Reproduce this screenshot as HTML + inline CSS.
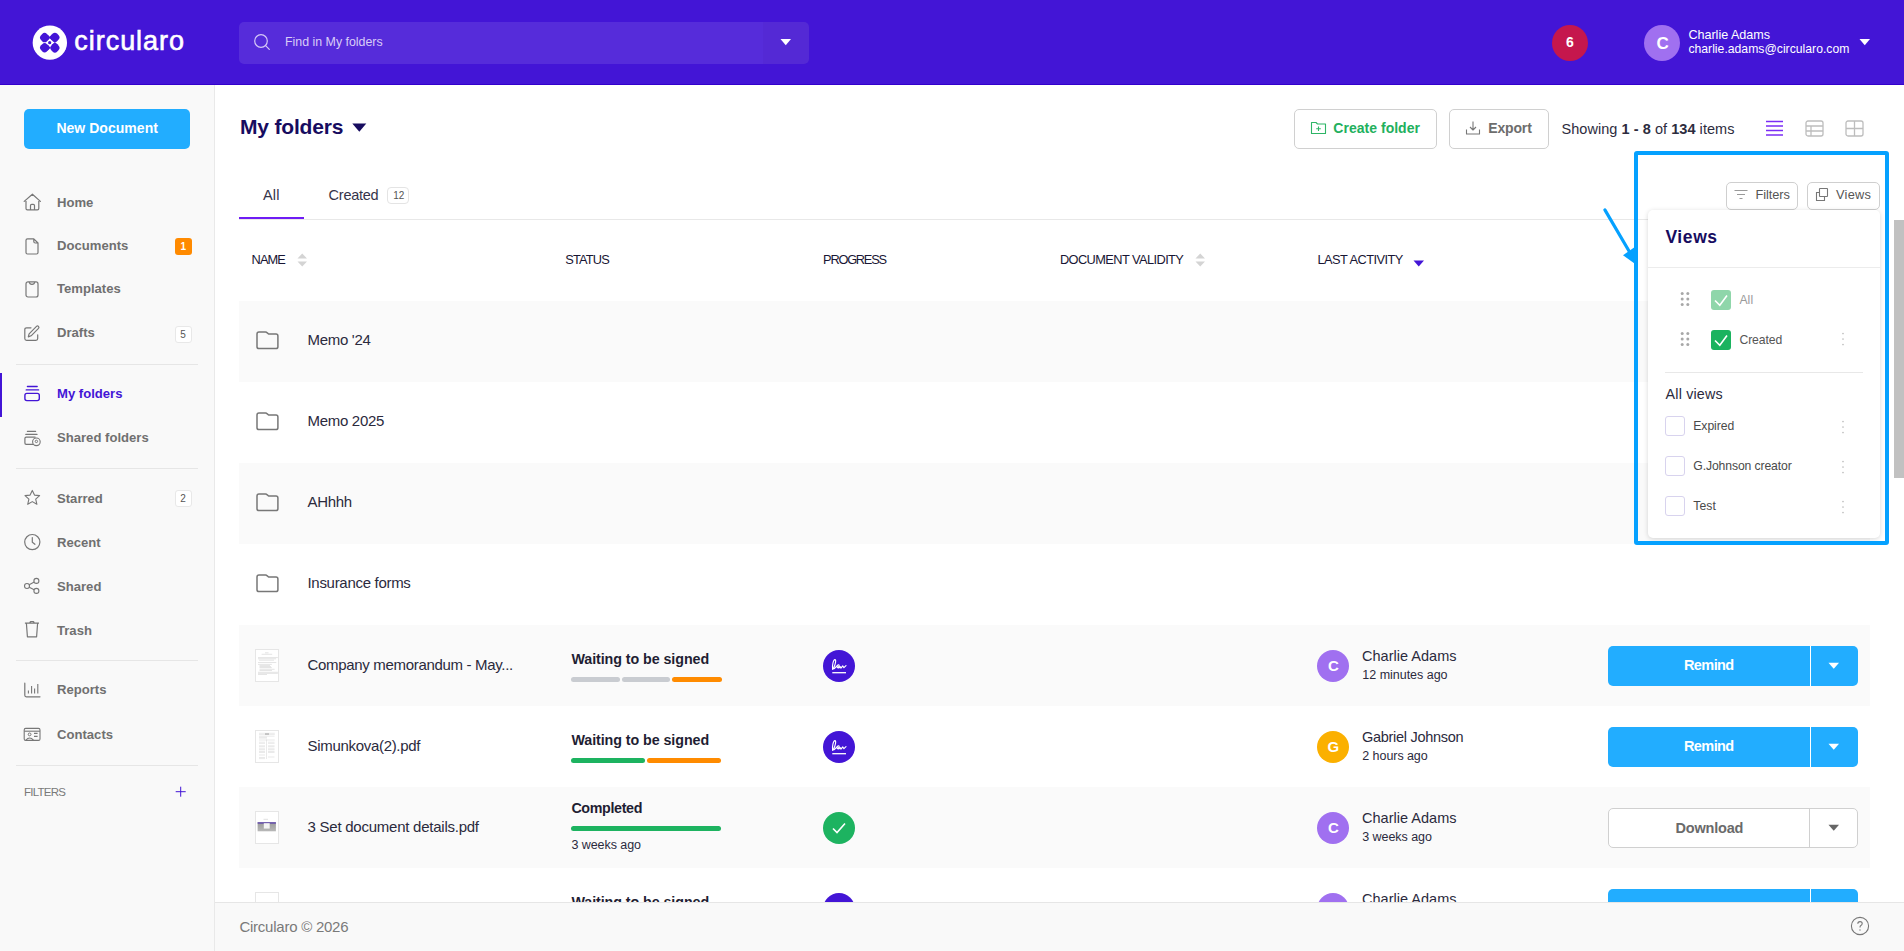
<!DOCTYPE html><html><head><meta charset="utf-8"><title>Circularo - My folders</title>
<style>
html,body{margin:0;padding:0;}
body{width:1904px;height:951px;overflow:hidden;position:relative;background:#fff;font-family:"Liberation Sans",sans-serif;}
.t{position:absolute;white-space:nowrap;}
.r{position:absolute;box-sizing:border-box;}
</style></head><body>
<div class="r" style="left:0px;top:0px;width:1904px;height:85px;background:#4315d6;border-bottom:1px solid #3300cc;"></div>
<svg class="r" style="left:30px;top:23px" width="40" height="40" viewBox="0 0 40 40" fill="none"><circle cx="19.85" cy="19.65" r="17.2" fill="#fff"/>
<g fill="#4315d6">
<g transform="translate(14.6 14.6) rotate(45)"><rect x="-4.2" y="-4.2" width="8.4" height="8.4" rx="3.4"/><rect x="0" y="-4.2" width="4.2" height="4.2"/></g>
<g transform="translate(24.9 14.4) rotate(45)"><rect x="-4.2" y="-4.2" width="8.4" height="8.4" rx="3.4"/><rect x="-4.2" y="0" width="4.2" height="4.2"/></g>
<g transform="translate(14.6 24.7) rotate(45)"><rect x="-4.2" y="-4.2" width="8.4" height="8.4" rx="3.4"/><rect x="0" y="-4.2" width="4.2" height="4.2"/></g>
<g transform="translate(24.9 24.9) rotate(45)"><rect x="-4.2" y="-4.2" width="8.4" height="8.4" rx="3.4"/><rect x="-4.2" y="-4.2" width="4.2" height="4.2"/></g>
</g>
<circle cx="19.7" cy="19.7" r="1.6" fill="#4315d6"/></svg>
<div class="t" style="left:74.30px;top:25.56px;font-size:27px;line-height:30.16px;color:#fff;letter-spacing:0.963px;-webkit-text-stroke:0.6px #fff;">circularo</div>
<div class="r" style="left:239px;top:22px;width:570px;height:42px;background:rgba(255,255,255,0.1);border-radius:5px;"></div>
<div class="r" style="left:763px;top:22px;width:46px;height:42px;background:rgba(60,0,140,0.06);border-radius:0 5px 5px 0;"></div>
<svg class="r" style="left:253px;top:33px" width="20" height="20" viewBox="0 0 20 20" fill="none"><circle cx="8" cy="8" r="6.3" stroke="#d5c8f7" stroke-width="1.2"/><path d="M12.6 12.6 L16.3 16.3" stroke="#d5c8f7" stroke-width="1.2" stroke-linecap="round"/></svg>
<div class="t" style="left:285.00px;top:35.78px;font-size:12.4px;line-height:13.85px;color:#d9cdf7;letter-spacing:-0.006px;">Find in My folders</div>
<svg class="r" style="left:780px;top:38px" width="12" height="8" viewBox="0 0 12 8" fill="none"><path d="M0.5 1 L11 1 L5.75 7.2 Z" fill="#fff"/></svg>
<div class="r" style="left:1552px;top:25px;width:36px;height:36px;background:#c5174d;border-radius:50%;"></div>
<div class="t" style="left:1566.00px;top:34.53px;font-size:14px;line-height:15.64px;color:#fff;font-weight:700;">6</div>
<div class="r" style="left:1644px;top:25px;width:36px;height:36px;background:#a070f0;border-radius:50%;"></div>
<div class="t" style="left:1656.50px;top:33.62px;font-size:17px;line-height:18.99px;color:#fff;font-weight:700;">C</div>
<div class="t" style="left:1688.40px;top:27.50px;font-size:12.6px;line-height:14.07px;color:#fff;letter-spacing:-0.017px;">Charlie Adams</div>
<div class="t" style="left:1688.40px;top:42.56px;font-size:12.2px;line-height:13.63px;color:#fff;letter-spacing:0.012px;">charlie.adams@circularo.com</div>
<svg class="r" style="left:1859px;top:38px" width="12" height="8" viewBox="0 0 12 8" fill="none"><path d="M0.5 1 L11 1 L5.75 7.2 Z" fill="#fff"/></svg>
<div class="r" style="left:0px;top:85px;width:215px;height:866px;background:#f9f9f9;border-right:1px solid #e9e9e9;"></div>
<div class="r" style="left:24px;top:109px;width:166px;height:40px;background:#22adff;border-radius:5px;"></div>
<div class="t" style="left:56.40px;top:121.33px;font-size:14px;line-height:15.64px;color:#fff;font-weight:700;letter-spacing:0.036px;">New Document</div>
<div class="t" style="left:57.00px;top:195.64px;font-size:13.1px;line-height:14.63px;color:#707070;font-weight:700;">Home</div>
<div class="t" style="left:57.00px;top:239.34px;font-size:13.1px;line-height:14.63px;color:#707070;font-weight:700;">Documents</div>
<div class="t" style="left:57.00px;top:282.44px;font-size:13.1px;line-height:14.63px;color:#707070;font-weight:700;">Templates</div>
<div class="t" style="left:57.00px;top:326.14px;font-size:13.1px;line-height:14.63px;color:#707070;font-weight:700;">Drafts</div>
<div class="t" style="left:57.00px;top:387.34px;font-size:13.1px;line-height:14.63px;color:#4315d6;font-weight:700;">My folders</div>
<div class="t" style="left:57.00px;top:431.14px;font-size:13.1px;line-height:14.63px;color:#707070;font-weight:700;">Shared folders</div>
<div class="t" style="left:57.00px;top:491.64px;font-size:13.1px;line-height:14.63px;color:#707070;font-weight:700;">Starred</div>
<div class="t" style="left:57.00px;top:535.64px;font-size:13.1px;line-height:14.63px;color:#707070;font-weight:700;">Recent</div>
<div class="t" style="left:57.00px;top:579.64px;font-size:13.1px;line-height:14.63px;color:#707070;font-weight:700;">Shared</div>
<div class="t" style="left:57.00px;top:623.64px;font-size:13.1px;line-height:14.63px;color:#707070;font-weight:700;">Trash</div>
<div class="t" style="left:57.00px;top:682.84px;font-size:13.1px;line-height:14.63px;color:#707070;font-weight:700;">Reports</div>
<div class="t" style="left:57.00px;top:727.64px;font-size:13.1px;line-height:14.63px;color:#707070;font-weight:700;">Contacts</div>
<div class="r" style="left:16px;top:364px;width:182px;height:1px;background:#e6e6e6;"></div>
<div class="r" style="left:16px;top:468px;width:182px;height:1px;background:#e6e6e6;"></div>
<div class="r" style="left:16px;top:660px;width:182px;height:1px;background:#e6e6e6;"></div>
<div class="r" style="left:16px;top:765px;width:182px;height:1px;background:#e6e6e6;"></div>
<div class="r" style="left:0px;top:373px;width:2px;height:44px;background:#4315d6;"></div>
<div class="r" style="left:175px;top:238px;width:17px;height:17px;background:#ff8a00;border-radius:3px;"></div>
<div class="t" style="left:180.50px;top:241.45px;font-size:10px;line-height:11.17px;color:#fff;font-weight:700;">1</div>
<div class="r" style="left:175px;top:326px;width:17px;height:17px;background:#fff;border:1px solid #e8e8e8;border-radius:3px;"></div>
<div class="t" style="left:180.30px;top:329.45px;font-size:10px;line-height:11.17px;color:#555;">5</div>
<div class="r" style="left:175px;top:490px;width:17px;height:17px;background:#fff;border:1px solid #e8e8e8;border-radius:3px;"></div>
<div class="t" style="left:180.30px;top:493.45px;font-size:10px;line-height:11.17px;color:#555;">2</div>
<div class="t" style="left:24.00px;top:785.59px;font-size:11.5px;line-height:12.85px;color:#7a7a7a;letter-spacing:-0.733px;">FILTERS</div>
<svg class="r" style="left:175px;top:786px" width="12" height="12" viewBox="0 0 12 12" fill="none"><path d="M5.7 0.7V10.7M0.7 5.7H10.7" stroke="#4315d6" stroke-width="1"/></svg>
<svg class="r" style="left:23px;top:193px" width="18" height="18" viewBox="0 0 18 18" fill="none"><path d="M1.2 8.4 L9.4 1.2 L17.4 8.4 M3 6.8 V15.4 Q3 16.8 4.4 16.8 H14.4 Q15.8 16.8 15.8 15.4 V6.8 M7.5 16.8 V12.6 Q7.5 11.4 8.7 11.4 H10.3 Q11.5 11.4 11.5 12.6 V16.8" stroke="#777" stroke-width="1.2" stroke-linejoin="round" stroke-linecap="round"/></svg>
<svg class="r" style="left:23px;top:237px" width="18" height="18" viewBox="0 0 18 18" fill="none"><path d="M4.5 1.8 H10.8 L15 6 V15.5 Q15 17 13.5 17 H4.5 Q3 17 3 15.5 V3.3 Q3 1.8 4.5 1.8 Z M10.8 1.8 V4.5 Q10.8 6 12.3 6 H15" stroke="#777" stroke-width="1.2" stroke-linejoin="round"/></svg>
<svg class="r" style="left:23px;top:280px" width="18" height="18" viewBox="0 0 18 18" fill="none"><rect x="3" y="1.9" width="12" height="15.1" rx="2" stroke="#777" stroke-width="1.2"/><path d="M6.3 2 Q6.5 4.3 9 4.3 Q11.5 4.3 11.7 2" stroke="#777" stroke-width="1.2"/></svg>
<svg class="r" style="left:23px;top:324px" width="18" height="18" viewBox="0 0 18 18" fill="none"><path d="M8 3.8 H3.6 Q1.8 3.8 1.8 5.6 V14.6 Q1.8 16.4 3.6 16.4 H12.9 Q14.7 16.4 14.7 14.6 V10.8" stroke="#777" stroke-width="1.2" stroke-linecap="round"/><path d="M5.3 12.9 L6.1 9.8 L13.5 2.4 Q14.5 1.5 15.5 2.4 Q16.4 3.4 15.5 4.4 L8.1 11.8 Z" stroke="#777" stroke-width="1.2" stroke-linejoin="round"/></svg>
<svg class="r" style="left:23px;top:385px" width="18" height="18" viewBox="0 0 18 18" fill="none"><rect x="1.9" y="8.4" width="14.4" height="7.2" rx="2" stroke="#4315d6" stroke-width="1.4"/><path d="M3.2 4.9 H15.6 M4.4 1.5 H14.2" stroke="#4315d6" stroke-width="1.3" stroke-linecap="round"/></svg>
<svg class="r" style="left:23px;top:429px" width="18" height="18" viewBox="0 0 18 18" fill="none"><path d="M11 15.4 H3.2 Q1.9 15.4 1.9 14.1 V9.5 Q1.9 8.2 3.2 8.2 H11.5 Q12.5 8.2 12.5 8.6" stroke="#777" stroke-width="1.2"/><path d="M2.8 5.4 H14 M4.4 2.4 H12.6" stroke="#777" stroke-width="1.2" stroke-linecap="round"/><circle cx="13.4" cy="12.8" r="3.8" fill="#f9f9f9" stroke="#777" stroke-width="1.1"/><circle cx="13.4" cy="12.4" r="1.2" stroke="#777" stroke-width="1"/></svg>
<svg class="r" style="left:23px;top:489px" width="18" height="18" viewBox="0 0 18 18" fill="none"><path d="M9.3 1.4 L11.5 6.1 L16.6 6.6 L12.7 10.1 L13.9 15.3 L9.3 12.6 L4.7 15.3 L5.9 10.1 L2 6.6 L7.1 6.1 Z" stroke="#777" stroke-width="1.1" stroke-linejoin="round"/></svg>
<svg class="r" style="left:23px;top:533px" width="18" height="18" viewBox="0 0 18 18" fill="none"><circle cx="9.3" cy="9.1" r="7.6" stroke="#777" stroke-width="1.2"/><path d="M9.3 4.6 V9.1 L11.9 11.3" stroke="#777" stroke-width="1.2" stroke-linecap="round"/></svg>
<svg class="r" style="left:23px;top:577px" width="18" height="18" viewBox="0 0 18 18" fill="none"><circle cx="4" cy="9" r="2.5" stroke="#777" stroke-width="1.1"/><circle cx="13.4" cy="3.9" r="2.5" stroke="#777" stroke-width="1.1"/><circle cx="13.4" cy="13.9" r="2.5" stroke="#777" stroke-width="1.1"/><path d="M6.2 7.8 L11.2 5.1 M6.2 10.2 L11.2 12.7" stroke="#777" stroke-width="1.1"/></svg>
<svg class="r" style="left:23px;top:621px" width="18" height="18" viewBox="0 0 18 18" fill="none"><path d="M1.9 2.2 H16 M6.8 2 Q7 0.3 9 0.3 Q11 0.3 11.2 2 M3.4 2.2 L4.4 15.8 H13.6 L14.6 2.2" stroke="#777" stroke-width="1.2" stroke-linejoin="round"/></svg>
<svg class="r" style="left:23px;top:681px" width="18" height="18" viewBox="0 0 18 18" fill="none"><path d="M1.8 2.2 V14.3 Q1.8 15.8 3.3 15.8 H17" stroke="#777" stroke-width="1.2" stroke-linecap="round"/><path d="M5.4 9.4 V12.6 M8.6 5 V12.6 M11.6 7.4 V12.6 M14.8 3 V12.6" stroke="#777" stroke-width="1.1"/></svg>
<svg class="r" style="left:23px;top:725px" width="18" height="18" viewBox="0 0 18 18" fill="none"><rect x="1.2" y="3.4" width="15.8" height="12" rx="1.5" stroke="#777" stroke-width="1.1"/><path d="M1.2 6.2 H17" stroke="#777" stroke-width="1.1"/><circle cx="6.6" cy="9.4" r="1.4" stroke="#777" stroke-width="1"/><path d="M2.8 15.3 Q6.6 10.8 10.6 15.3 M11 8.4 H14.6 M11 11.4 H14.6" stroke="#777" stroke-width="1.1"/></svg>
<div class="t" style="left:240.00px;top:115.00px;font-size:21px;line-height:23.46px;color:#170c5f;font-weight:700;letter-spacing:-0.189px;">My folders</div>
<svg class="r" style="left:352px;top:123px" width="15" height="10" viewBox="0 0 15 10" fill="none"><path d="M0.3 0.6 H14.3 L7.3 8.8 Z" fill="#170c5f"/></svg>
<div class="r" style="left:1294px;top:109px;width:143px;height:40px;border:1px solid #d0d0d0;border-radius:5px;background:#fff;"></div>
<svg class="r" style="left:1310px;top:121px" width="17" height="14" viewBox="0 0 17 14" fill="none"><path d="M1.5 12.5 V1.5 H6 L7.5 3 H15.5 V12.5 Z" stroke="#2db566" stroke-width="1.1" stroke-linejoin="round"/><path d="M8.5 5.5 V10 M6.2 7.8 H10.8" stroke="#2db566" stroke-width="1.1"/></svg>
<div class="t" style="left:1333.30px;top:121.33px;font-size:14px;line-height:15.64px;color:#22b05d;font-weight:700;letter-spacing:0.025px;">Create folder</div>
<div class="r" style="left:1449px;top:109px;width:100px;height:40px;border:1px solid #d0d0d0;border-radius:5px;background:#fff;"></div>
<svg class="r" style="left:1465px;top:120px" width="16" height="16" viewBox="0 0 16 16" fill="none"><path d="M8 1.5 V10 M5 7 L8 10 L11 7 M1.5 9.5 V14 H14.5 V9.5" stroke="#777" stroke-width="1.1" stroke-linejoin="round"/></svg>
<div class="t" style="left:1488.20px;top:121.33px;font-size:14px;line-height:15.64px;color:#6d6d6d;font-weight:700;letter-spacing:-0.140px;">Export</div>
<div class="t" style="left:1561.50px;top:121.28px;font-size:14.5px;line-height:16.20px;color:#2d2c3e;letter-spacing:0.05px;">Showing <b>1 - 8</b> of <b>134</b> items</div>
<svg class="r" style="left:1765px;top:120px" width="19" height="17" viewBox="0 0 19 17" fill="none"><path d="M1 1.5 H18 M1 6 H18 M1 10.5 H18 M1 15 H18" stroke="#7b2cf5" stroke-width="1.6"/></svg>
<svg class="r" style="left:1805px;top:120px" width="19" height="17" viewBox="0 0 19 17" fill="none"><rect x="1" y="1" width="17" height="15" rx="2" stroke="#bdbdbd" stroke-width="1.3"/><path d="M1 6 H18 M1 11 H18 M6 6 V16" stroke="#bdbdbd" stroke-width="1.3"/></svg>
<svg class="r" style="left:1845px;top:120px" width="19" height="17" viewBox="0 0 19 17" fill="none"><rect x="1" y="1" width="17" height="15" rx="2" stroke="#bdbdbd" stroke-width="1.3"/><path d="M1 8.5 H18 M9.5 1 V16" stroke="#bdbdbd" stroke-width="1.3"/></svg>
<div class="t" style="left:263.10px;top:186.88px;font-size:14.5px;line-height:16.20px;color:#35344a;letter-spacing:0.100px;">All</div>
<div class="t" style="left:328.60px;top:186.88px;font-size:14.5px;line-height:16.20px;color:#35344a;letter-spacing:-0.250px;">Created</div>
<div class="r" style="left:387px;top:187px;width:22px;height:17px;border:1px solid #e4e4e4;border-radius:4px;"></div>
<div class="t" style="left:393.20px;top:189.95px;font-size:10px;line-height:11.17px;color:#555;letter-spacing:-0.100px;">12</div>
<div class="r" style="left:239px;top:219px;width:1631px;height:1px;background:#e8e8e8;"></div>
<div class="r" style="left:239px;top:217px;width:65px;height:2px;background:#6f1cf5;"></div>
<div class="t" style="left:251.60px;top:252.92px;font-size:12.8px;line-height:14.30px;color:#181634;letter-spacing:-0.933px;">NAME</div>
<div class="t" style="left:565.20px;top:252.92px;font-size:12.8px;line-height:14.30px;color:#181634;letter-spacing:-0.820px;">STATUS</div>
<div class="t" style="left:823.10px;top:252.92px;font-size:12.8px;line-height:14.30px;color:#181634;letter-spacing:-1.229px;">PROGRESS</div>
<div class="t" style="left:1059.90px;top:252.92px;font-size:12.8px;line-height:14.30px;color:#181634;letter-spacing:-0.575px;">DOCUMENT VALIDITY</div>
<div class="t" style="left:1317.50px;top:252.92px;font-size:12.8px;line-height:14.30px;color:#181634;letter-spacing:-0.533px;">LAST ACTIVITY</div>
<svg class="r" style="left:297px;top:253px" width="11" height="14" viewBox="0 0 11 14" fill="none"><path d="M0.5 5.5 L5.25 0.5 L10 5.5 Z M0.5 8.5 H10 L5.25 13.5 Z" fill="#d4d4d4"/></svg>
<svg class="r" style="left:1194.5px;top:253px" width="11" height="14" viewBox="0 0 11 14" fill="none"><path d="M0.5 5.5 L5.25 0.5 L10 5.5 Z M0.5 8.5 H10 L5.25 13.5 Z" fill="#d4d4d4"/></svg>
<svg class="r" style="left:1413px;top:260px" width="12" height="7" viewBox="0 0 12 7" fill="none"><path d="M0.5 0.5 H11 L5.75 6.5 Z" fill="#4315d6"/></svg>
<div class="r" style="left:239px;top:301px;width:1631px;height:81px;background:#fafafa;"></div>
<div class="r" style="left:239px;top:463px;width:1631px;height:81px;background:#fafafa;"></div>
<div class="r" style="left:239px;top:625px;width:1631px;height:81px;background:#fafafa;"></div>
<div class="r" style="left:239px;top:787px;width:1631px;height:81px;background:#fafafa;"></div>
<svg class="r" style="left:255px;top:330px" width="25" height="22" viewBox="0 0 25 22" fill="none"><path d="M2 4 Q2 2 4 2 H10.5 Q11.5 2 12.3 2.9 L13.3 3.8 Q13.8 4.1 14.5 4.1 H21 Q22.9 4.1 22.9 6 V16.7 Q22.9 18.6 21 18.6 H4 Q2 18.6 2 16.7 Z" stroke="#777" stroke-width="1.5" stroke-linejoin="round"/></svg>
<div class="t" style="left:307.50px;top:332.43px;font-size:15px;line-height:16.75px;color:#2b2a3d;letter-spacing:-0.3px;">Memo '24</div>
<svg class="r" style="left:255px;top:411px" width="25" height="22" viewBox="0 0 25 22" fill="none"><path d="M2 4 Q2 2 4 2 H10.5 Q11.5 2 12.3 2.9 L13.3 3.8 Q13.8 4.1 14.5 4.1 H21 Q22.9 4.1 22.9 6 V16.7 Q22.9 18.6 21 18.6 H4 Q2 18.6 2 16.7 Z" stroke="#777" stroke-width="1.5" stroke-linejoin="round"/></svg>
<div class="t" style="left:307.50px;top:413.43px;font-size:15px;line-height:16.75px;color:#2b2a3d;letter-spacing:-0.3px;">Memo 2025</div>
<svg class="r" style="left:255px;top:492px" width="25" height="22" viewBox="0 0 25 22" fill="none"><path d="M2 4 Q2 2 4 2 H10.5 Q11.5 2 12.3 2.9 L13.3 3.8 Q13.8 4.1 14.5 4.1 H21 Q22.9 4.1 22.9 6 V16.7 Q22.9 18.6 21 18.6 H4 Q2 18.6 2 16.7 Z" stroke="#777" stroke-width="1.5" stroke-linejoin="round"/></svg>
<div class="t" style="left:307.50px;top:494.43px;font-size:15px;line-height:16.75px;color:#2b2a3d;letter-spacing:-0.3px;">AHhhh</div>
<svg class="r" style="left:255px;top:573px" width="25" height="22" viewBox="0 0 25 22" fill="none"><path d="M2 4 Q2 2 4 2 H10.5 Q11.5 2 12.3 2.9 L13.3 3.8 Q13.8 4.1 14.5 4.1 H21 Q22.9 4.1 22.9 6 V16.7 Q22.9 18.6 21 18.6 H4 Q2 18.6 2 16.7 Z" stroke="#777" stroke-width="1.5" stroke-linejoin="round"/></svg>
<div class="t" style="left:307.50px;top:575.42px;font-size:15px;line-height:16.75px;color:#2b2a3d;letter-spacing:-0.3px;">Insurance forms</div>
<svg class="r" style="left:255px;top:649px" width="24" height="33" viewBox="0 0 24 33" fill="none"><rect x="0.5" y="0.5" width="23" height="32" fill="#fff" stroke="#e6e6e6"/><g stroke="#c4c4c4" stroke-width="0.45"><path d="M10 3.8 H13.5 M6.6 5.3 H17.2 M3 8.6 H22.9 M3 9.8 H21 M4 11.2 H19 M3 13.5 H21.3 M3 15.4 H16.8 M4.5 16.6 H15 M4.5 17.6 H16 M4.5 18.6 H16.8 M4.5 20.3 H19.6 M4.5 21.5 H17 M3 23.3 H22.9 M3 24.4 H22.9 M3 25.5 H12"/></g></svg>
<div class="t" style="left:307.50px;top:656.62px;font-size:15px;line-height:16.75px;color:#2b2a3d;letter-spacing:-0.319px;">Company memorandum - May...</div>
<svg class="r" style="left:255px;top:730px" width="24" height="33" viewBox="0 0 24 33" fill="none"><rect x="0.5" y="0.5" width="23" height="32" fill="#fff" stroke="#e6e6e6"/><g stroke="#cfcfcf" stroke-width="0.45"><path d="M4 3.3 H19.8 M4 4.6 H19.8 M4 6.2 H19.6 M4 7.2 H12 M4 8.1 H12 M4 10 H19.8 M4 12.2 H10 M13 12.2 H19.5 M4 13.4 H10 M13 13.4 H19.5 M4 15.8 H10 M13 15.8 H19.5 M4 16.8 H10 M13 16.8 H19.5 M4 18.8 H10 M13 18.8 H19.5 M4 19.8 H10 M13 19.8 H19.5 M4 21.5 H10 M13 21.5 H19.5 M4 22.5 H10 M13 22.5 H19.5 M4 25 H10 M4 27.5 H10 M13 27 H19.5 M4 28.6 H10 M11.5 9.5 V29"/></g><path d="M10 4 H14" stroke="#888" stroke-width="0.8"/></svg>
<div class="t" style="left:307.50px;top:737.62px;font-size:15px;line-height:16.75px;color:#2b2a3d;letter-spacing:-0.307px;">Simunkova(2).pdf</div>
<svg class="r" style="left:255px;top:811px" width="24" height="33" viewBox="0 0 24 33" fill="none"><rect x="0.5" y="0.5" width="23" height="32" fill="#fff" stroke="#e6e6e6"/><defs><linearGradient id="g2" x1="0" y1="0" x2="0" y2="1"><stop offset="0" stop-color="#9a9a9a"/><stop offset="1" stop-color="#b8b8b8"/></linearGradient></defs><path d="M8.5 8.3 H13" stroke="#ccc" stroke-width="0.6"/><rect x="2.6" y="11.3" width="18.3" height="9" fill="url(#g2)"/><rect x="2.6" y="11.3" width="18.3" height="1.3" fill="#5a3fae"/><rect x="8.8" y="12.2" width="5.9" height="5.4" fill="#f4f4f4"/></svg>
<div class="t" style="left:307.50px;top:818.62px;font-size:15px;line-height:16.75px;color:#2b2a3d;letter-spacing:-0.244px;">3 Set document details.pdf</div>
<svg class="r" style="left:255px;top:892px" width="24" height="33" viewBox="0 0 24 33" fill="none"><rect x="0.5" y="0.5" width="23" height="32" fill="#fff" stroke="#e6e6e6"/></svg>
<div class="t" style="left:571.40px;top:652.26px;font-size:14.3px;line-height:15.97px;color:#1f1e33;font-weight:700;letter-spacing:-0.079px;">Waiting to be signed</div>
<div class="r" style="left:571px;top:677px;width:49px;height:5px;background:#c9ccd1;border-radius:3px;"></div>
<div class="r" style="left:622px;top:677px;width:48px;height:5px;background:#c9ccd1;border-radius:3px;"></div>
<div class="r" style="left:672px;top:677px;width:50px;height:5px;background:#ff8b00;border-radius:3px;"></div>
<svg class="r" style="left:823px;top:650px" width="32" height="32" viewBox="0 0 32 32" fill="none"><circle cx="16" cy="16" r="16" fill="#4315d6"/><path d="M9.6 19.4 C9 16 10.3 9.6 11.9 9.6 C13.4 9.7 12.6 14.2 10.3 18.8 C11.6 18.9 12.9 17.2 14.2 15.6 C15.1 14.5 16.5 14.7 16.1 16 C15.7 17.1 14.1 17.3 13.9 16.5 C14.2 18.4 16.1 18.3 17.1 16.6 L18 18.1 L19.7 15.9 L20.9 17.7 L23 15.6" stroke="#fff" stroke-width="1.15" fill="none" stroke-linecap="round" stroke-linejoin="round"/><path d="M9.3 22.7 H23" stroke="#fff" stroke-width="1.3"/></svg>
<div class="r" style="left:1317px;top:650px;width:32px;height:32px;background:#a070f0;border-radius:50%;"></div>
<div class="t" style="left:1328.00px;top:657.92px;font-size:15px;line-height:16.75px;color:#fff;font-weight:700;">C</div>
<div class="t" style="left:1362.00px;top:647.68px;font-size:14.5px;line-height:16.20px;color:#2b2a3d;letter-spacing:0.017px;">Charlie Adams</div>
<div class="t" style="left:1362.30px;top:668.69px;font-size:12.5px;line-height:13.96px;color:#2b2a3d;letter-spacing:-0.015px;">12 minutes ago</div>
<div class="r" style="left:1608px;top:646px;width:250px;height:40px;background:#22adff;border-radius:5px;"></div>
<div class="r" style="left:1810px;top:646px;width:1px;height:40px;background:#fff;"></div>
<div class="t" style="left:1684.00px;top:657.18px;font-size:14.5px;line-height:16.20px;color:#fff;font-weight:700;letter-spacing:-0.600px;">Remind</div>
<svg class="r" style="left:1828px;top:662px" width="12" height="8" viewBox="0 0 12 8" fill="none"><path d="M0.5 0.8 H11 L5.75 6.8 Z" fill="#fff"/></svg>
<div class="t" style="left:571.40px;top:733.26px;font-size:14.3px;line-height:15.97px;color:#1f1e33;font-weight:700;letter-spacing:-0.079px;">Waiting to be signed</div>
<div class="r" style="left:571px;top:758px;width:74px;height:5px;background:#1db360;border-radius:3px;"></div>
<div class="r" style="left:647px;top:758px;width:74px;height:5px;background:#ff8b00;border-radius:3px;"></div>
<svg class="r" style="left:823px;top:731px" width="32" height="32" viewBox="0 0 32 32" fill="none"><circle cx="16" cy="16" r="16" fill="#4315d6"/><path d="M9.6 19.4 C9 16 10.3 9.6 11.9 9.6 C13.4 9.7 12.6 14.2 10.3 18.8 C11.6 18.9 12.9 17.2 14.2 15.6 C15.1 14.5 16.5 14.7 16.1 16 C15.7 17.1 14.1 17.3 13.9 16.5 C14.2 18.4 16.1 18.3 17.1 16.6 L18 18.1 L19.7 15.9 L20.9 17.7 L23 15.6" stroke="#fff" stroke-width="1.15" fill="none" stroke-linecap="round" stroke-linejoin="round"/><path d="M9.3 22.7 H23" stroke="#fff" stroke-width="1.3"/></svg>
<div class="r" style="left:1317px;top:731px;width:32px;height:32px;background:#fbb000;border-radius:50%;"></div>
<div class="t" style="left:1327.50px;top:738.92px;font-size:15px;line-height:16.75px;color:#fff;font-weight:700;">G</div>
<div class="t" style="left:1362.00px;top:728.68px;font-size:14.5px;line-height:16.20px;color:#2b2a3d;letter-spacing:-0.286px;">Gabriel Johnson</div>
<div class="t" style="left:1362.30px;top:749.69px;font-size:12.5px;line-height:13.96px;color:#2b2a3d;letter-spacing:-0.060px;">2 hours ago</div>
<div class="r" style="left:1608px;top:727px;width:250px;height:40px;background:#22adff;border-radius:5px;"></div>
<div class="r" style="left:1810px;top:727px;width:1px;height:40px;background:#fff;"></div>
<div class="t" style="left:1684.00px;top:738.18px;font-size:14.5px;line-height:16.20px;color:#fff;font-weight:700;letter-spacing:-0.600px;">Remind</div>
<svg class="r" style="left:1828px;top:743px" width="12" height="8" viewBox="0 0 12 8" fill="none"><path d="M0.5 0.8 H11 L5.75 6.8 Z" fill="#fff"/></svg>
<div class="t" style="left:571.40px;top:801.26px;font-size:14.3px;line-height:15.97px;color:#1f1e33;font-weight:700;letter-spacing:-0.363px;">Completed</div>
<div class="r" style="left:571px;top:826px;width:150px;height:5px;background:#1db360;border-radius:3px;"></div>
<div class="t" style="left:571.40px;top:839.09px;font-size:12.5px;line-height:13.96px;color:#2b2a3d;letter-spacing:-0.060px;">3 weeks ago</div>
<svg class="r" style="left:823px;top:812px" width="32" height="32" viewBox="0 0 32 32" fill="none"><circle cx="16" cy="16" r="16" fill="#1db360"/><path d="M10 16.5 L14 20.5 L22 11.5" stroke="#fff" stroke-width="1.6" fill="none"/></svg>
<div class="r" style="left:1317px;top:812px;width:32px;height:32px;background:#a070f0;border-radius:50%;"></div>
<div class="t" style="left:1328.00px;top:819.92px;font-size:15px;line-height:16.75px;color:#fff;font-weight:700;">C</div>
<div class="t" style="left:1362.00px;top:809.68px;font-size:14.5px;line-height:16.20px;color:#2b2a3d;letter-spacing:0.017px;">Charlie Adams</div>
<div class="t" style="left:1362.30px;top:830.69px;font-size:12.5px;line-height:13.96px;color:#2b2a3d;letter-spacing:-0.060px;">3 weeks ago</div>
<div class="r" style="left:1608px;top:808px;width:250px;height:40px;background:#fff;border:1px solid #d0d0d0;border-radius:5px;"></div>
<div class="r" style="left:1809px;top:808px;width:1px;height:40px;background:#d0d0d0;"></div>
<div class="t" style="left:1675.50px;top:819.58px;font-size:14.5px;line-height:16.20px;color:#6a6a6a;font-weight:700;letter-spacing:-0.186px;">Download</div>
<svg class="r" style="left:1828px;top:824px" width="12" height="8" viewBox="0 0 12 8" fill="none"><path d="M0.5 0.8 H11 L5.75 6.8 Z" fill="#666"/></svg>
<div class="t" style="left:571.40px;top:895.26px;font-size:14.3px;line-height:15.97px;color:#1f1e33;font-weight:700;letter-spacing:-0.079px;">Waiting to be signed</div>
<svg class="r" style="left:823px;top:893px" width="32" height="32" viewBox="0 0 32 32" fill="none"><circle cx="16" cy="16" r="16" fill="#4315d6"/><path d="M9.6 19.4 C9 16 10.3 9.6 11.9 9.6 C13.4 9.7 12.6 14.2 10.3 18.8 C11.6 18.9 12.9 17.2 14.2 15.6 C15.1 14.5 16.5 14.7 16.1 16 C15.7 17.1 14.1 17.3 13.9 16.5 C14.2 18.4 16.1 18.3 17.1 16.6 L18 18.1 L19.7 15.9 L20.9 17.7 L23 15.6" stroke="#fff" stroke-width="1.15" fill="none" stroke-linecap="round" stroke-linejoin="round"/><path d="M9.3 22.7 H23" stroke="#fff" stroke-width="1.3"/></svg>
<div class="r" style="left:1317px;top:893px;width:32px;height:32px;background:#a070f0;border-radius:50%;"></div>
<div class="t" style="left:1328.00px;top:900.92px;font-size:15px;line-height:16.75px;color:#fff;font-weight:700;">C</div>
<div class="t" style="left:1362.00px;top:890.68px;font-size:14.5px;line-height:16.20px;color:#2b2a3d;letter-spacing:0.017px;">Charlie Adams</div>
<div class="r" style="left:1608px;top:889px;width:250px;height:40px;background:#22adff;border-radius:5px;"></div>
<div class="r" style="left:1810px;top:889px;width:1px;height:40px;background:#fff;"></div>
<div class="t" style="left:1684.00px;top:900.18px;font-size:14.5px;line-height:16.20px;color:#fff;font-weight:700;letter-spacing:-0.600px;">Remind</div>
<svg class="r" style="left:1828px;top:905px" width="12" height="8" viewBox="0 0 12 8" fill="none"><path d="M0.5 0.8 H11 L5.75 6.8 Z" fill="#fff"/></svg>
<div class="r" style="left:215px;top:902px;width:1689px;height:49px;background:#f9f9f9;border-top:1px solid #e6e6e6;"></div>
<div class="t" style="left:239.40px;top:918.62px;font-size:15px;line-height:16.75px;color:#7a7a7a;letter-spacing:-0.240px;">Circularo © 2026</div>
<svg class="r" style="left:1850px;top:916px" width="20" height="20" viewBox="0 0 20 20" fill="none"><circle cx="10" cy="10" r="8.6" stroke="#777" stroke-width="1.1"/><path d="M7.8 7.8 Q7.8 5.6 10 5.6 Q12.2 5.6 12.2 7.6 Q12.2 9 10.6 9.8 Q10 10.2 10 11.6" stroke="#777" stroke-width="1.1" fill="none"/><circle cx="10" cy="14" r="0.7" fill="#777"/></svg>
<div class="r" style="left:1894px;top:220px;width:10px;height:258px;background:#c1c1c1;"></div>
<div class="r" style="left:1726px;top:182px;width:72px;height:28px;border:1px solid #cfcfcf;border-radius:5px;background:#fff;"></div>
<svg class="r" style="left:1733px;top:187px" width="16" height="16" viewBox="0 0 16 16" fill="none"><path d="M1.5 3.5 H14.5 M4 7.5 H12 M6.5 11.5 H9.5" stroke="#9a9a9a" stroke-width="1.2"/></svg>
<div class="t" style="left:1755.50px;top:188.42px;font-size:12.8px;line-height:14.30px;color:#555;letter-spacing:-0.067px;">Filters</div>
<div class="r" style="left:1807px;top:182px;width:73px;height:28px;border:1px solid #cfcfcf;border-radius:5px;background:#fff;"></div>
<svg class="r" style="left:1814px;top:187px" width="16" height="16" viewBox="0 0 16 16" fill="none"><rect x="5.5" y="1.5" width="8" height="8" rx="0.5" stroke="#777" stroke-width="1.1"/><path d="M5.5 5.5 H2.5 V13.5 H10.5 V9.5" stroke="#777" stroke-width="1.1"/></svg>
<div class="t" style="left:1836.00px;top:188.42px;font-size:12.8px;line-height:14.30px;color:#555;letter-spacing:0.275px;">Views</div>
<div class="r" style="left:1648px;top:210px;width:232px;height:328px;background:#fff;border-radius:5px;box-shadow:0 1px 5px rgba(0,0,0,0.16);"></div>
<div class="t" style="left:1665.40px;top:227.66px;font-size:17.5px;line-height:19.55px;color:#170c5f;font-weight:700;letter-spacing:0.600px;">Views</div>
<div class="r" style="left:1648px;top:267px;width:232px;height:1px;background:#ececec;"></div>
<svg class="r" style="left:1679px;top:291px" width="12" height="16" viewBox="0 0 12 16" fill="none"><circle cx="3.2000000000000455" cy="2.5" r="1.5" fill="#a8a8a8"/><circle cx="3.2000000000000455" cy="8" r="1.5" fill="#a8a8a8"/><circle cx="3.2000000000000455" cy="13.5" r="1.5" fill="#a8a8a8"/><circle cx="8.799999999999955" cy="2.5" r="1.5" fill="#a8a8a8"/><circle cx="8.799999999999955" cy="8" r="1.5" fill="#a8a8a8"/><circle cx="8.799999999999955" cy="13.5" r="1.5" fill="#a8a8a8"/></svg>
<svg class="r" style="left:1711px;top:290px" width="20" height="20" viewBox="0 0 20 20" fill="none"><rect width="20" height="20" rx="3" fill="#8fd6aa"/><path d="M4 10.5 L8.8 15.3 L16 5.5" stroke="#fff" stroke-width="1.6" fill="none"/></svg>
<div class="t" style="left:1739.40px;top:293.96px;font-size:12.2px;line-height:13.63px;color:#9a9a9a;letter-spacing:0.100px;">All</div>
<svg class="r" style="left:1679px;top:331px" width="12" height="16" viewBox="0 0 12 16" fill="none"><circle cx="3.2000000000000455" cy="2.5" r="1.5" fill="#a8a8a8"/><circle cx="3.2000000000000455" cy="8" r="1.5" fill="#a8a8a8"/><circle cx="3.2000000000000455" cy="13.5" r="1.5" fill="#a8a8a8"/><circle cx="8.799999999999955" cy="2.5" r="1.5" fill="#a8a8a8"/><circle cx="8.799999999999955" cy="8" r="1.5" fill="#a8a8a8"/><circle cx="8.799999999999955" cy="13.5" r="1.5" fill="#a8a8a8"/></svg>
<svg class="r" style="left:1711px;top:330px" width="20" height="20" viewBox="0 0 20 20" fill="none"><rect width="20" height="20" rx="3" fill="#1bb35f"/><path d="M4 10.5 L8.8 15.3 L16 5.5" stroke="#fff" stroke-width="1.6" fill="none"/></svg>
<div class="t" style="left:1739.40px;top:333.96px;font-size:12.2px;line-height:13.63px;color:#555;letter-spacing:-0.067px;">Created</div>
<svg class="r" style="left:1841px;top:332px" width="4" height="14" viewBox="0 0 4 14" fill="none"><circle cx="2" cy="1.5" r="0.85" fill="#bdbdbd"/><circle cx="2" cy="7" r="0.85" fill="#bdbdbd"/><circle cx="2" cy="12.5" r="0.85" fill="#bdbdbd"/></svg>
<div class="r" style="left:1665px;top:372px;width:198px;height:1px;background:#e8e8e8;"></div>
<div class="t" style="left:1665.60px;top:387.06px;font-size:14.3px;line-height:15.97px;color:#2b2a3d;letter-spacing:0.175px;">All views</div>
<div class="r" style="left:1665px;top:416px;width:20px;height:20px;border:1px solid #d8d3ee;border-radius:3px;background:#fff;"></div>
<div class="t" style="left:1693.30px;top:419.96px;font-size:12.2px;line-height:13.63px;color:#4a4a4a;letter-spacing:-0.067px;">Expired</div>
<svg class="r" style="left:1841px;top:420px" width="4" height="14" viewBox="0 0 4 14" fill="none"><circle cx="2" cy="1.5" r="0.85" fill="#bdbdbd"/><circle cx="2" cy="7" r="0.85" fill="#bdbdbd"/><circle cx="2" cy="12.5" r="0.85" fill="#bdbdbd"/></svg>
<div class="r" style="left:1665px;top:456px;width:20px;height:20px;border:1px solid #d8d3ee;border-radius:3px;background:#fff;"></div>
<div class="t" style="left:1693.30px;top:459.96px;font-size:12.2px;line-height:13.63px;color:#4a4a4a;letter-spacing:-0.113px;">G.Johnson creator</div>
<svg class="r" style="left:1841px;top:460px" width="4" height="14" viewBox="0 0 4 14" fill="none"><circle cx="2" cy="1.5" r="0.85" fill="#bdbdbd"/><circle cx="2" cy="7" r="0.85" fill="#bdbdbd"/><circle cx="2" cy="12.5" r="0.85" fill="#bdbdbd"/></svg>
<div class="r" style="left:1665px;top:496px;width:20px;height:20px;border:1px solid #d8d3ee;border-radius:3px;background:#fff;"></div>
<div class="t" style="left:1693.30px;top:499.96px;font-size:12.2px;line-height:13.63px;color:#4a4a4a;letter-spacing:0.100px;">Test</div>
<svg class="r" style="left:1841px;top:500px" width="4" height="14" viewBox="0 0 4 14" fill="none"><circle cx="2" cy="1.5" r="0.85" fill="#bdbdbd"/><circle cx="2" cy="7" r="0.85" fill="#bdbdbd"/><circle cx="2" cy="12.5" r="0.85" fill="#bdbdbd"/></svg>
<div class="r" style="left:1634px;top:151px;width:255px;height:394px;border:4px solid #05a1ff;border-radius:3px;"></div>
<svg class="r" style="left:1598px;top:204px" width="44" height="66" viewBox="0 0 44 66" fill="none"><path d="M6.9 5.9 L31 47" stroke="#05a1ff" stroke-width="3.2" stroke-linecap="round"/><path d="M25 51.2 L37.5 42.5 L40 62 Z" fill="#05a1ff"/></svg>
</body></html>
